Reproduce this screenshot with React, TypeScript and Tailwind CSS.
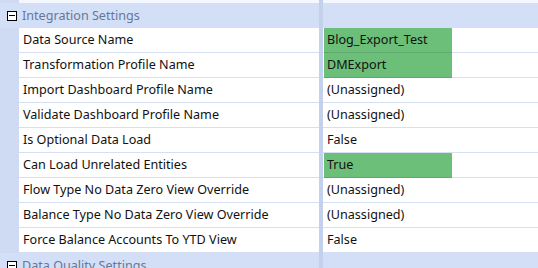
import React from "react"

type Row = {
  label: string
  value: string
  highlight?: boolean
}

const rows: Row[] = [
  { label: "Data Source Name", value: "Blog_Export_Test", highlight: true },
  { label: "Transformation Profile Name", value: "DMExport", highlight: true },
  { label: "Import Dashboard Profile Name", value: "(Unassigned)" },
  { label: "Validate Dashboard Profile Name", value: "(Unassigned)" },
  { label: "Is Optional Data Load", value: "False" },
  { label: "Can Load Unrelated Entities", value: "True", highlight: true },
  { label: "Flow Type No Data Zero View Override", value: "(Unassigned)" },
  { label: "Balance Type No Data Zero View Override", value: "(Unassigned)" },
  { label: "Force Balance Accounts To YTD View", value: "False" },
]

function MinusBox() {
  return (
    <span className="flex h-[10px] w-[10px] items-center justify-center border border-black bg-white">
      <span className="h-px w-[6px] bg-black" />
    </span>
  )
}

function CategoryRow({ title }: { title: string }) {
  return (
    <div className="flex h-[25px] shrink-0 bg-[#d3dff6]">
      <div className="flex w-[19px] items-center justify-end pr-[2px]">
        <MinusBox />
      </div>
      <div className="flex w-[300px] items-center pl-[3px] pt-px text-[12.6px] text-[#66789a]">{title}</div>
      <div className="w-[4px] bg-[#c4d1ec]" />
      <div className="flex-1" />
    </div>
  )
}

function PropertyRow({ row }: { row: Row }) {
  return (
    <div className="flex h-[25px] shrink-0">
      <div className="w-[19px] bg-[#cfdbf3]" />
      <div className="flex w-[300px] items-center border-b border-[#d6e0f5] pl-[4px] pt-px text-[#111]">{row.label}</div>
      <div className="w-[4px] bg-[#c4d1ec]" />
      <div className="flex flex-1 border-b border-[#d6e0f5] pl-px">
        {row.highlight ? (
          <div className="-mb-px flex h-[25px] w-[128px] items-center border-b border-[#5ea96b] bg-[#6bbf78] pl-[3px] pt-px text-[#111]">
            {row.value}
          </div>
        ) : (
          <div className="flex items-center pl-[3px] pt-px text-[#111]">{row.value}</div>
        )}
      </div>
    </div>
  )
}

export default function App() {
  return (
    <div className="flex h-[268px] w-[538px] flex-col overflow-hidden bg-white font-['Noto_Sans',sans-serif] text-[12.6px]">
      <div className="flex h-[3px] shrink-0">
        <div className="w-[19px] bg-[#cfdbf3]" />
        <div className="w-[300px] bg-[#f4f7fd]" />
        <div className="w-[4px] bg-[#c4d1ec]" />
        <div className="flex-1 bg-[#f4f7fd]" />
      </div>
      <CategoryRow title="Integration Settings" />
      {rows.map((row) => (
        <PropertyRow key={row.label} row={row} />
      ))}
      <CategoryRow title="Data Quality Settings" />
    </div>
  )
}
